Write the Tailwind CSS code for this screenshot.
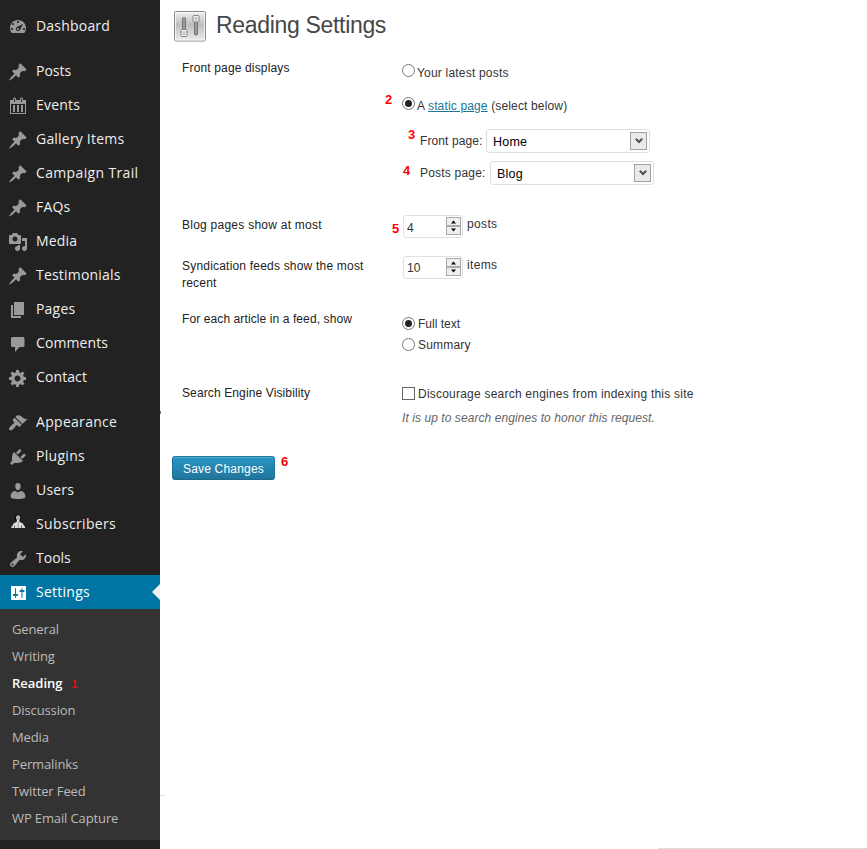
<!DOCTYPE html>
<html lang="en">
<head>
<meta charset="utf-8">
<title>Reading Settings</title>
<script src="https://cdn.jsdelivr.net/npm/@tailwindcss/browser@4"></script>
</head>
<body class="bg-white">
<svg class="hidden">
  <symbol id="pin" viewBox="0 0 20 20"><path d="M10.44 3.02l1.82-1.82 6.36 6.35-1.83 1.82c-1.05-.68-2.48-.57-3.41.36l-.75.75c-.92.93-1.04 2.35-.35 3.41l-1.83 1.82-2.41-2.41-2.8 2.79c-.42.42-3.38 2.71-3.8 2.29s1.86-3.39 2.28-3.81l2.79-2.79L4.1 9.36l1.83-1.82c1.05.69 2.48.57 3.4-.36l.75-.75c.93-.92 1.05-2.35.36-3.41z"/></symbol>
  <symbol id="dash" viewBox="0 0 20 20"><path fill-rule="evenodd" d="M3.76 17h12.48c1.1-1.37 1.76-3.11 1.76-5 0-4.42-3.58-8-8-8s-8 3.58-8 8c0 1.89.66 3.63 1.76 5zM9 6c0-.55.45-1 1-1s1 .45 1 1c0 .56-.45 1-1 1s-1-.44-1-1zM4 8c0-.55.45-1 1-1s1 .45 1 1c0 .56-.45 1-1 1s-1-.44-1-1zm4.52 3.4c.84-.83 6.51-3.5 6.51-3.5s-2.66 5.68-3.49 6.51c-.84.84-2.18.84-3.02 0-.83-.83-.83-2.18 0-3.01zM3 13c0-.55.45-1 1-1s1 .45 1 1c0 .56-.45 1-1 1s-1-.44-1-1zm6 0c0 .55.45 1 1 1s1-.45 1-1c0-.56-.45-1-1-1s-1 .44-1 1zm6 0c0-.55.45-1 1-1s1 .45 1 1c0 .56-.45 1-1 1s-1-.44-1-1z"/></symbol>
  <symbol id="cal" viewBox="0 0 20 20"><path fill-rule="evenodd" d="M15 4h3v14H2V4h3V3c0-.83.67-1.5 1.5-1.5S8 2.17 8 3v1h4V3c0-.83.67-1.5 1.5-1.5S15 2.17 15 3v1zM6 3v2.5c0 .28.22.5.5.5s.5-.22.5-.5V3c0-.28-.22-.5-.5-.5S6 2.72 6 3zm7 0v2.5c0 .28.22.5.5.5s.5-.22.5-.5V3c0-.28-.22-.5-.5-.5s-.5.22-.5.5zm4 14V8H3v9h14zM7 16V9H5v7h2zm4 0V9H9v7h2zm4 0V9h-2v7h2z"/></symbol>
  <symbol id="media" viewBox="0 0 20 20"><path fill-rule="evenodd" d="M13 11V4c0-.55-.45-1-1-1h-1.67L9 1H5L3.67 3H2c-.55 0-1 .45-1 1v7c0 .55.45 1 1 1h10c.55 0 1-.45 1-1zM7 4.5c1.38 0 2.5 1.12 2.5 2.5S8.38 9.5 7 9.5 4.5 8.38 4.5 7 5.62 4.5 7 4.5zM14 6h5v10.5c0 1.38-1.12 2.5-2.5 2.5S14 17.88 14 16.5s1.12-2.5 2.5-2.5c.17 0 .34.02.5.05V9h-3V6zm-4 8.05V13h2v3.5c0 1.38-1.12 2.5-2.5 2.5S7 17.88 7 16.5 8.12 14 9.5 14c.17 0 .34.02.5.05z"/></symbol>
  <symbol id="pages" viewBox="0 0 20 20"><path d="M6 15V2h10v13H6zm-1 1h8v2H3V5h2v11z"/></symbol>
  <symbol id="comment" viewBox="0 0 20 20"><path d="M4.500 3h10.500c.8 0 1.500.7 1.500 1.500v7c0 .8-.7 1.500-1.500 1.500h-3.500L7 18v-5H4.500C3.700 13 3 12.300 3 11.500v-7C3 3.700 3.700 3 4.500 3z"/></symbol>
  <symbol id="gear" viewBox="0 0 20 20"><path fill-rule="evenodd" d="M18 12h-2.180c-.17.7-.44 1.350-.81 1.930l1.540 1.540-2.100 2.100-1.540-1.540c-.58.36-1.230.63-1.910.79V19H8v-2.180c-.68-.16-1.330-.43-1.910-.79l-1.540 1.540-2.120-2.120 1.540-1.540c-.36-.58-.63-1.230-.79-1.910H1V9.030h2.170c.16-.7.44-1.350.8-1.940L2.430 5.550l2.100-2.100 1.540 1.540c.58-.37 1.240-.64 1.930-.81V2h3v2.180c.68.16 1.330.43 1.910.79l1.540-1.540 2.120 2.120-1.540 1.540c.36.59.64 1.240.8 1.940H18V12zm-8.500 1.500c1.660 0 3-1.340 3-3s-1.340-3-3-3-3 1.340-3 3 1.340 3 3 3z"/></symbol>
  <symbol id="brush" viewBox="0 0 20 20"><path d="M14.480 11.060L7.410 3.990l1.500-1.500c.5-.56 2.300-.47 3.510.32 1.210.8 1.430 1.280 2.910 2.100 1.180.64 2.450 1.260 4.450.85zm-.71.71L6.700 4.700 4.930 6.470c-.39.39-.39 1.020 0 1.410l1.060 1.060c.39.39.39 1.030 0 1.420-.6.6-1.430 1.110-2.210 1.690-.35.26-.7.53-1.010.84C1.430 14.230.4 16.080 1.400 17.070c.99 1 2.840-.03 4.180-1.360.31-.31.58-.66.85-1.020.57-.78 1.080-1.610 1.690-2.210.39-.39 1.020-.39 1.410 0l1.060 1.060c.39.39 1.020.39 1.410 0z"/></symbol>
  <symbol id="plug" viewBox="0 0 20 20"><path d="M13.110 4.360L9.870 7.600 8 5.730l3.240-3.240c.35-.34 1.050-.2 1.560.32.52.51.66 1.210.31 1.550zm-8 1.770l.91-1.120 9.010 9.010-1.190.84c-.71.71-2.630 1.160-3.820 1.160H6.140L4.900 17.260c-.59.59-1.540.59-2.120 0-.59-.58-.59-1.530 0-2.120l1.240-1.240v-3.880c0-1.130.4-3.190 1.090-3.890zm7.260 3.970l3.240-3.240c.34-.35 1.040-.21 1.550.31.52.51.66 1.210.31 1.550l-3.240 3.250z"/></symbol>
  <symbol id="user" viewBox="0 0 20 20"><path d="M10 9.250c-2.270 0-2.730-3.440-2.730-3.440C7 4.020 7.820 2 9.970 2c2.160 0 2.980 2.020 2.710 3.810 0 0-.41 3.440-2.680 3.440zM7.300 10L10 11.500 12.720 10c2.390 0 4.520 2.330 4.520 4.530v2.490s-3.650 1.130-7.240 1.130c-3.650 0-7.240-1.130-7.240-1.130v-2.490c0-2.250 1.940-4.480 4.540-4.530z"/></symbol>
  <symbol id="sub" viewBox="0 0 20 20"><circle cx="10" cy="3" r="3.400" fill="#0c0c0c"/><path fill="#b5b5b5" d="M8 2.500c0-3 4.200-3 4.200 0 0 1.600-.8 2.900-2.100 2.900S8 4.100 8 2.500z"/><path fill="#ddd" d="M8.800 5h2.600v1.800c1.200.9 2.600.9 3.800 2.200.4.600.6 1.300.7 2l1.100.5V13H3.400v-1.500l1.100-.5c.1-.7.300-1.400.7-2 1.200-1.300 2.400-1.300 3.600-2.200z"/><path fill="#333" d="M9.800 7.500h.7v1h-.7zM9.800 9.500h.7v1h-.7zM9.800 11.500h.7v1h-.7zM6.300 10.500h.7V13h-.7zM13.300 10.500h.7V13h-.7z"/></symbol>
  <symbol id="wrench" viewBox="0 0 20 20"><path fill-rule="evenodd" d="M16.680 9.770c-1.340 1.340-3.300 1.670-4.950.99l-5.410 6.520c-.99.99-2.590.99-3.580 0s-.99-2.590 0-3.570l6.520-5.420c-.68-1.650-.35-3.610.99-4.950 1.280-1.280 3.120-1.620 4.720-1.060l-2.890 2.890 2.820 2.820 2.860-2.870c.53 1.580.18 3.390-1.080 4.650zM3.810 16.210c.4.39 1.040.39 1.430 0 .4-.4.4-1.040 0-1.430-.39-.4-1.030-.4-1.430 0-.39.39-.39 1.030 0 1.430z"/></symbol>
  <symbol id="sliders" viewBox="0 0 20 20"><path fill-rule="evenodd" d="M18 16V4c0-.55-.45-1-1-1H4c-.55 0-1 .45-1 1v12c0 .55.45 1 1 1h13c.55 0 1-.45 1-1zM8 11h1c.55 0 1 .45 1 1s-.45 1-1 1H8v1.500c0 .28-.22.5-.5.5s-.5-.22-.5-.5V13H6c-.55 0-1-.45-1-1s.45-1 1-1h1V5.500c0-.28.22-.5.5-.5s.5.220.5.5V11zm5.500-2h-1c-.55 0-1-.45-1-1s.45-1 1-1h1V5.500c0-.28.22-.5.5-.5s.5.220.5.5V7h1c.55 0 1 .45 1 1s-.45 1-1 1h-1v5.500c0 .28-.22.5-.5.5s-.5-.22-.5-.5V9z"/></symbol>
</svg>

<div class="flex h-[849px] w-[867px] overflow-hidden">
  <!-- Admin menu -->
  <nav class="relative flex w-[160px] shrink-0 flex-col bg-[#222] pt-[9px] font-['Open_Sans',sans-serif] text-[14px] leading-[34px] tracking-[0.2px] text-[#eee]">
    <a class="flex h-[34px] gap-2 pl-2"><svg class="mt-[7px] size-5 fill-[#999]"><use href="#dash"/></svg>Dashboard</a>
    <div class="h-[11px]"></div>
    <a class="flex h-[34px] gap-2 pl-2 tracking-normal"><svg class="mt-2 size-5 fill-[#999]"><use href="#pin"/></svg>Posts</a>
    <a class="flex h-[34px] gap-2 pl-2"><svg class="mt-2 size-5 fill-[#999]"><use href="#cal"/></svg>Events</a>
    <a class="flex h-[34px] gap-2 pl-2"><svg class="mt-2 size-5 fill-[#999]"><use href="#pin"/></svg>Gallery Items</a>
    <a class="flex h-[34px] gap-2 pl-2 tracking-[0.35px]"><svg class="mt-2 size-5 fill-[#999]"><use href="#pin"/></svg>Campaign Trail</a>
    <a class="flex h-[34px] gap-2 pl-2"><svg class="mt-2 size-5 fill-[#999]"><use href="#pin"/></svg>FAQs</a>
    <a class="flex h-[34px] gap-2 pl-2"><svg class="mt-2 size-5 fill-[#999]"><use href="#media"/></svg>Media</a>
    <a class="flex h-[34px] gap-2 pl-2"><svg class="mt-2 size-5 fill-[#999]"><use href="#pin"/></svg>Testimonials</a>
    <a class="flex h-[34px] gap-2 pl-2"><svg class="mt-2 size-5 fill-[#999]"><use href="#pages"/></svg>Pages</a>
    <a class="flex h-[34px] gap-2 pl-2 tracking-[0.1px]"><svg class="mt-2 size-5 fill-[#999]"><use href="#comment"/></svg>Comments</a>
    <a class="flex h-[34px] gap-2 pl-2 tracking-[0.1px]"><svg class="mt-2 size-5 fill-[#999]"><use href="#gear"/></svg>Contact</a>
    <div class="h-[11px]"></div>
    <a class="flex h-[34px] gap-2 pl-2 tracking-[0.3px]"><svg class="mt-2 size-5 fill-[#999]"><use href="#brush"/></svg>Appearance</a>
    <a class="flex h-[34px] gap-2 pl-2 tracking-[0.3px]"><svg class="mt-2 size-5 fill-[#999]"><use href="#plug"/></svg>Plugins</a>
    <a class="flex h-[34px] gap-2 pl-2"><svg class="mt-2 size-5 fill-[#999]"><use href="#user"/></svg>Users</a>
    <a class="flex h-[34px] gap-2 pl-2 tracking-[0.35px]"><svg class="mt-2 size-5"><use href="#sub"/></svg>Subscribers</a>
    <a class="flex h-[34px] gap-2 pl-2 tracking-normal"><svg class="mt-2 size-5 fill-[#999]"><use href="#wrench"/></svg>Tools</a>
    <a class="flex h-[34px] gap-2 bg-[#0074a2] pl-2 tracking-[0.25px] text-white"><svg class="mt-2 size-5 fill-white"><use href="#sliders"/></svg>Settings<svg class="mt-[9px] ml-auto h-4 w-2 fill-[#f1f1f1]" viewBox="0 0 8 16"><path d="M8 0v16L0 8z"/></svg></a>
    <div class="flex h-[231px] flex-col bg-[#333] pt-[7px] pl-3 text-[13px] leading-[27px] tracking-[-0.12px] text-[#bbb]">
      <a>General</a>
      <a>Writing</a>
      <a class="flex h-[27px] font-semibold tracking-normal text-white">Reading<span class="ml-[9px] font-['Liberation_Sans',sans-serif] text-[11px] leading-[29px] font-bold text-[#d11]">1</span></a>
      <a>Discussion</a>
      <a>Media</a>
      <a>Permalinks</a>
      <a>Twitter Feed</a>
      <a>WP Email Capture</a>
    </div>
    <i class="absolute top-[411px] left-[160px] h-[3px] w-px bg-[#777]"></i>
    <i class="absolute top-[795px] left-[160px] h-px w-[5px] bg-[#ddd]"></i>
  </nav>

  <!-- Settings form -->
  <main class="relative flex grow flex-col font-['Liberation_Sans',Arial,sans-serif] text-[12px] leading-[17px] tracking-[0.2px] text-[#333]">
    <header class="flex h-[60px] pt-[10px] pl-[14px]">
      <svg class="h-[33px] w-[33px]" viewBox="0 0 33 33">
        <defs>
          <linearGradient id="g" x1="0" y1="0" x2="0" y2="1"><stop offset="0" stop-color="#f2f2f2"/><stop offset=".45" stop-color="#bdbdbd"/><stop offset="1" stop-color="#eee"/></linearGradient>
        </defs>
        <rect x=".5" y="1.500" width="31" height="29.500" rx="1.500" fill="url(#g)" stroke="#888"/>
        <rect x="1.500" y="2.500" width="29" height="27.500" fill="none" stroke="#fff" stroke-opacity=".7"/>
        <rect x="8.500" y="7.500" width="3" height="15" rx="1" fill="#999" stroke="#777"/>
        <rect x="20.500" y="10" width="3" height="15" rx="1" fill="#999" stroke="#777"/>
        <rect x="7" y="19.500" width="6" height="7" rx="1" fill="#f4f4f4" stroke="#888"/>
        <path d="M8.500 22h3M8.500 24h3" stroke="#999"/>
        <rect x="19" y="5.500" width="6" height="6.500" rx="1" fill="#f4f4f4" stroke="#888"/>
        <path d="M20.500 8h3M20.500 10h3" stroke="#999"/>
      </svg>
      <h1 class="ml-[9px] text-[23px] leading-[31px] tracking-[-0.32px] text-[#464646]">Reading Settings</h1>
    </header>

    <section class="flex h-[156px] pl-[22px]">
      <div class="w-[220px] tracking-[0.15px] text-[#222]">Front page displays</div>
      <div class="flex flex-col">
        <label class="mt-1 flex h-[17px] leading-[19px]"><span class="mr-[2px] size-[13px] rounded-full border border-[#777] bg-white"></span>Your latest posts</label>
        <label class="mt-4 flex h-[17px] leading-[19px] tracking-[0.15px] whitespace-pre"><span class="mr-[2px] flex size-[13px] items-center justify-center rounded-full border border-[#777] bg-white"><span class="size-[7px] rounded-full bg-[#222]"></span></span>A <a class="text-[#21759b] underline">static page</a> (select below)</label>
        <div class="mt-[15px] flex h-6 pl-[18px] leading-6">
          <span class="w-[66px] tracking-[0.1px]">Front page:</span>
          <div class="flex h-6 w-[164px] items-center justify-between rounded-[3px] border border-[#dfdfdf] pr-[2px] text-[12.500px] text-black"><span class="pt-px pl-[6px]">Home</span><span class="flex h-[18px] w-[17px] items-center justify-center border border-[#a0a0a0] bg-[#eaeaea]"><svg class="h-[6px] w-[8px]" viewBox="0 0 8 6"><path d="M.8 .8L4 4l3.200-3.200" fill="none" stroke="#505050" stroke-width="2"/></svg></span></div>
        </div>
        <div class="mt-2 flex h-6 pl-[18px] leading-6">
          <span class="w-[70px]">Posts page:</span>
          <div class="flex h-6 w-[164px] items-center justify-between rounded-[3px] border border-[#dfdfdf] pr-[2px] text-[12.500px] text-black"><span class="pt-px pl-[6px]">Blog</span><span class="flex h-[18px] w-[17px] items-center justify-center border border-[#a0a0a0] bg-[#eaeaea]"><svg class="h-[6px] w-[8px]" viewBox="0 0 8 6"><path d="M.8 .8L4 4l3.200-3.200" fill="none" stroke="#505050" stroke-width="2"/></svg></span></div>
        </div>
      </div>
    </section>

    <section class="flex h-[41px] pl-[22px]">
      <div class="w-[221px] pt-px tracking-[0.25px] text-[#222]">Blog pages show at most</div>
      <div class="-mt-px flex h-[23px] w-[60px] justify-between rounded-[3px] border border-[#dfdfdf] pt-px pr-px pl-[3px] leading-[22px]">4<span class="flex h-[18px] w-[15px] flex-col border border-[#aaa] bg-[#eee]"><svg class="h-4 w-[13px]" viewBox="0 0 13 16"><path d="M0 8h13" stroke="#aaa" stroke-width="2"/><path d="M4 5.500h5L6.500 2.500zM4 10.500h5l-2.500 3z"/></svg></span></div>
      <span class="ml-[4px] tracking-[0.35px]">posts</span>
    </section>

    <section class="flex h-[53px] pl-[22px]">
      <div class="w-[221px] pt-px text-[#222]">Syndication feeds show the most<br>recent</div>
      <div class="-mt-px flex h-[23px] w-[60px] justify-between rounded-[3px] border border-[#dfdfdf] pt-px pr-px pl-[3px] leading-[21px]">10<span class="flex h-[18px] w-[15px] flex-col border border-[#aaa] bg-[#eee]"><svg class="h-4 w-[13px]" viewBox="0 0 13 16"><path d="M0 8h13" stroke="#aaa" stroke-width="2"/><path d="M4 5.500h5L6.500 2.500zM4 10.500h5l-2.500 3z"/></svg></span></div>
      <span class="ml-[4px] tracking-[0.35px]">items</span>
    </section>

    <section class="flex h-[75px] pl-[22px]">
      <div class="w-[220px] pt-px tracking-[0.1px] text-[#222]">For each article in a feed, show</div>
      <div class="flex flex-col pt-[5px]">
        <label class="flex h-[21px] leading-[19px] tracking-normal"><span class="mt-[2px] mr-[3px] flex size-[13px] items-center justify-center rounded-full border border-[#777] bg-white"><span class="size-[7px] rounded-full bg-[#222]"></span></span>Full text</label>
        <label class="flex h-[21px] leading-[19px]"><span class="mt-[2px] mr-[3px] size-[13px] rounded-full border border-[#777] bg-white"></span>Summary</label>
      </div>
    </section>

    <section class="flex h-[71px] pl-[22px]">
      <div class="w-[220px] tracking-[0.12px] text-[#222]">Search Engine Visibility</div>
      <div>
        <label class="flex h-6 leading-[19px] tracking-[0.22px]"><span class="mt-[2px] mr-[3px] size-[13px] border border-[#666] bg-white"></span>Discourage search engines from indexing this site</label>
        <p class="pt-px tracking-[0.07px] text-[#666] italic">It is up to search engines to honor this request.</p>
      </div>
    </section>

    <div class="pl-3"><button class="block h-6 w-[103px] rounded-[3px] border border-[#21759b] border-b-[#1e6a8d] bg-linear-to-b from-[#2a95c5] to-[#21759b] text-[12px] leading-6 tracking-[0.2px] text-white shadow-[inset_0_1px_0_rgba(120,200,230,0.5)]">Save Changes</button></div>

    <!-- Step markers laid over the form -->
    <div class="text-[13px] leading-4 font-bold tracking-normal text-[#f00]">
      <b class="absolute top-[92px] left-[225px]">2</b>
      <b class="absolute top-[127px] left-[248px]">3</b>
      <b class="absolute top-[163px] left-[243px]">4</b>
      <b class="absolute top-[221px] left-[232px]">5</b>
      <b class="absolute top-[454px] left-[121px]">6</b>
    </div>
    <i class="absolute right-0 bottom-0 h-px w-[209px] bg-[#ddd]"></i>
  </main>
</div>
</body>
</html>
